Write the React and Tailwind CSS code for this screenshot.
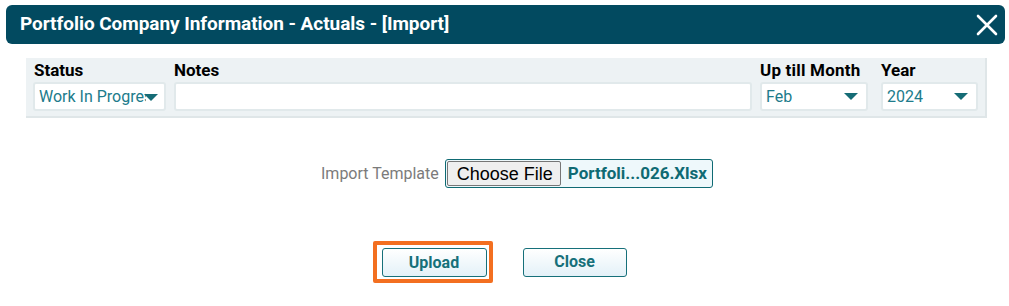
import { useState } from "react";

function Caret() {
    return (
        <svg width="14" height="8" viewBox="0 0 14 8" className="shrink-0">
            <path d="M0 0 L14 0 L7 7 Z" fill="#156c76" />
        </svg>
    );
}

function SelectBox({ value, className, truncate }) {
    return (
        <div
            className={`h-[29px] bg-white border-2 border-[#e1e9eb] rounded-[3px] flex items-center pl-[4px] pr-[6px] ${className}`}
        >
            <span
                className={`text-[16px] text-[#207b8b] leading-none ${truncate ? "whitespace-nowrap overflow-hidden w-[107px]" : "flex-1"}`}
            >
                {value}
            </span>
            {truncate ? <span className="ml-[-2px] mt-[2px]"><Caret /></span> : <Caret />}
        </div>
    );
}

export default function App() {
    const [fileName] = useState("Portfoli...026.Xlsx");

    return (
        <div className="w-[1009px] h-[306px] bg-white font-['Roboto',sans-serif] overflow-hidden">
            {/* header bar */}
            <div className="ml-[6px] mt-[5px] w-[999px] h-[39px] bg-[#024a60] rounded-[6px] flex items-center justify-between pl-[14px] pr-[7px]">
                <h2 className="text-white font-bold text-[19px] tracking-[-0.05px]">
                    Portfolio Company Information - Actuals - [Import]
                </h2>
                <button className="text-white">
                    <svg width="22" height="22" viewBox="0 0 22 22" fill="none" stroke="currentColor" strokeWidth={2.6} strokeLinecap="round">
                        <path d="M2 2 L20 20 M20 2 L2 20" />
                    </svg>
                </button>
            </div>

            {/* filters panel */}
            <div className="ml-[26px] mt-[14px] w-[961px] bg-[#edf2f4] border-r-2 border-b-2 border-[#dfe6e8] px-[7px] pt-[2px] pb-[5px] flex gap-[8px]">
                <div className="flex flex-col w-[133px]">
                    <label className="font-bold text-[17px] text-black leading-[20px] pl-[1px]">Status</label>
                    <SelectBox value="Work In Progress" truncate className="mt-[2px] w-[133px]" />
                </div>
                <div className="flex flex-col flex-1">
                    <label className="font-bold text-[17px] text-black leading-[20px]">Notes</label>
                    <div className="mt-[2px] h-[29px] bg-white border-2 border-[#e1e9eb] rounded-[3px]" />
                </div>
                <div className="flex flex-col w-[108px]">
                    <label className="font-bold text-[17px] text-black leading-[20px] whitespace-nowrap tracking-[0.2px]">Up till Month</label>
                    <SelectBox value="Feb" className="mt-[2px] w-[108px] pr-[8px]" />
                </div>
                <div className="flex flex-col w-[97px] ml-[5px]">
                    <label className="font-bold text-[17px] text-black leading-[20px]">Year</label>
                    <SelectBox value="2024" className="mt-[2px] w-[97px] pr-[8px]" />
                </div>
            </div>

            {/* import template */}
            <div className="mt-[41px] h-[29px] flex items-center justify-center pl-[25px]">
                <span className="text-[16px] text-[#7b7b7b] mr-[6px]">Import Template</span>
                <div className="h-[29px] flex items-stretch border border-[#0f6a73] rounded-[3px] bg-[#eef8fb] overflow-hidden">
                    <button className="pl-[9px] pr-[7px] bg-[#efefef] border border-[#767676] rounded-[2px] m-[1px] text-[18px] text-black font-['Liberation_Sans',Arial,sans-serif] leading-none">
                        Choose File
                    </button>
                    <span className="flex items-center pl-[6px] pr-[5px] font-bold text-[17px] text-[#0f6a73]">
                        {fileName}
                    </span>
                </div>
            </div>

            {/* actions */}
            <div className="mt-[53px] flex items-center justify-center gap-[30px] pr-[10px]">
                <div className="border-[4px] border-[#f36f20] rounded-[2px] pl-[5px] pt-[3px] pr-[2px] pb-[2px]">
                    <button className="block w-[105px] h-[29px] border border-[#16707a] rounded-[3px] bg-gradient-to-b from-white to-[#e3f1f8] text-[#16707a] font-bold text-[16px]">
                        Upload
                    </button>
                </div>
                <button className="w-[104px] h-[29px] border border-[#16707a] rounded-[3px] bg-gradient-to-b from-white to-[#e3f1f8] text-[#16707a] font-bold text-[16px]">
                    Close
                </button>
            </div>
        </div>
    );
}
